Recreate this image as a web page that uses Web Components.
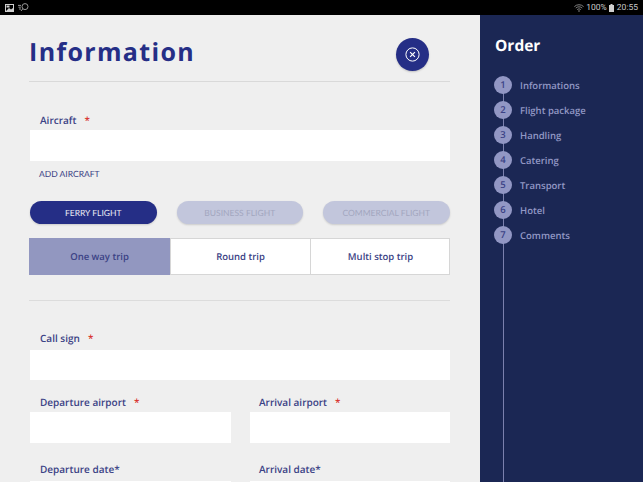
<!DOCTYPE html>
<html>
<head>
<meta charset="utf-8">
<title>Information</title>
<style>
  html, body { margin: 0; padding: 0; height: 482px; overflow: hidden; background: #efefef; }
  body { display: flex; flex-direction: column; font-family: "Open Sans", sans-serif; text-rendering: geometricPrecision; }
  .app { display: flex; flex: 1; min-height: 0; }
</style>
</head>
<body>
<status-bar></status-bar>
<div class="app">
  <info-panel>
    <form-field required style="margin-top:30px;--label-lh:17px">Aircraft</form-field>
    <add-link>ADD AIRCRAFT</add-link>
    <pill-group>
      <flight-pill active>FERRY FLIGHT</flight-pill>
      <flight-pill>BUSINESS FLIGHT</flight-pill>
      <flight-pill>COMMERCIAL FLIGHT</flight-pill>
    </pill-group>
    <trip-tabs></trip-tabs>
    <form-field required style="margin-top:28px;--box-gap:3px;--box-h:30px">Call sign</form-field>
    <field-row style="margin-top:13px;--box-gap:1px">
      <form-field required>Departure airport</form-field>
      <form-field required style="--label-pad:10px">Arrival airport</form-field>
    </field-row>
    <field-row style="margin-top:17px;--box-gap:3px">
      <form-field>Departure date*</form-field>
      <form-field style="--label-pad:10px">Arrival date*</form-field>
    </field-row>
  </info-panel>
  <order-nav>
    <order-step n="1">Informations</order-step>
    <order-step n="2">Flight package</order-step>
    <order-step n="3">Handling</order-step>
    <order-step n="4">Catering</order-step>
    <order-step n="5">Transport</order-step>
    <order-step n="6">Hotel</order-step>
    <order-step n="7">Comments</order-step>
  </order-nav>
</div>

<script>
class StatusBar extends HTMLElement {
  constructor() {
    super();
    this.attachShadow({ mode: 'open' }).innerHTML = `
    <style>
      :host { display: flex; align-items: center; justify-content: space-between; height: 15px; background: #000; color: #c9c9c9; font: 8.5px "Roboto", sans-serif; padding: 0 5px 0 5px; box-sizing: border-box; flex: none; }
      .left, .right { display: flex; align-items: center; }
      .left { gap: 4px; }
      .right { gap: 2px; }
      svg { display: block; }
    </style>
    <div class="left">
      <svg width="9" height="8" viewBox="0 0 9 8"><rect x=".5" y=".5" width="8" height="7" fill="none" stroke="#d0d0d0"/><rect x="1.5" y="1.5" width="3" height="2" fill="#d0d0d0"/><path d="M1 7 L4 4 L6 5.5 L8 4 V7Z" fill="#d0d0d0"/></svg>
      <svg width="11" height="9" viewBox="0 0 11 9" fill="none" stroke="#a8a8a8" stroke-width=".9"><circle cx="7" cy="3.6" r="3"/><path d="M4.8 5.8 L3 8M0 2.4h3M.5 4.2h2.4M1 6h2"/></svg>
    </div>
    <div class="right">
      <svg width="10" height="8" viewBox="0 0 10 8" fill="none" stroke="#8f8f8f" stroke-width=".9"><path d="M.4 2.6a6.6 6.6 0 0 1 9.2 0M1.8 4.1a4.6 4.6 0 0 1 6.4 0M3.2 5.6a2.6 2.6 0 0 1 3.6 0"/><circle cx="5" cy="7" r=".8" fill="#8f8f8f" stroke="none"/></svg>
      <span>100%</span>
      <svg width="5" height="8" viewBox="0 0 5 8" style="margin-right:1px"><path d="M1.5 0h2v1H5v7H0V1h1.5z" fill="#d0d0d0"/></svg>
      <span>20:55</span>
    </div>`;
  }
}

class InfoPanel extends HTMLElement {
  constructor() {
    super();
    this.attachShadow({ mode: 'open' }).innerHTML = `
    <style>
      :host { display: block; width: 480px; flex: none; box-sizing: border-box; padding: 0 30px 0 29px; background: #efefef; overflow: hidden; }
      header { display: flex; align-items: center; justify-content: space-between; height: 67px; border-bottom: 1px solid #d9d9d9; box-sizing: border-box; padding: 8px 21px 0 0; }
      h1 { margin: 0; font: 700 25px "Open Sans", sans-serif; letter-spacing: 1.35px; color: #252e86; }
      button { width: 33px; height: 33px; padding: 0; border: 0; border-radius: 50%; background: #252e86; display: flex; align-items: center; justify-content: center; box-shadow: 0 1px 2px rgba(0,0,0,.2); margin-top: 4px; }
    </style>
    <header>
      <h1>Information</h1>
      <button aria-label="Close">
        <svg width="15" height="15" viewBox="0 0 15 15" fill="none" stroke="#fff" stroke-width="1"><circle cx="7.5" cy="7.5" r="6.6"/><path d="M5.1 5.1l4.8 4.8M9.9 5.1l-4.8 4.8" stroke-width="1.2"/></svg>
      </button>
    </header>
    <slot></slot>`;
  }
}

class FormField extends HTMLElement {
  constructor() {
    super();
    this.attachShadow({ mode: 'open' }).innerHTML = `
    <style>
      :host { display: block; flex: 1; min-width: 0; }
      label { display: block; height: 18px; padding-left: var(--label-pad, 11px); font: 600 10px/var(--label-lh, 19px) "Open Sans", sans-serif; color: #3b4285; white-space: nowrap; }
      i { font-style: normal; color: #d8312c; margin-left: 8px; }
      .box { height: var(--box-h, 31px); background: #fff; margin: var(--box-gap, 0) 0 0 1px; }
    </style>
    <label><slot></slot><i></i></label>
    <div class="box"></div>`;
  }
  connectedCallback() {
    this.shadowRoot.querySelector('i').textContent = this.hasAttribute('required') ? '*' : '';
  }
}

class FieldRow extends HTMLElement {
  constructor() {
    super();
    this.attachShadow({ mode: 'open' }).innerHTML = `
    <style>:host { display: grid; grid-template-columns: 202px 201px; column-gap: 18px; }</style>
    <slot></slot>`;
  }
}

class AddLink extends HTMLElement {
  constructor() {
    super();
    this.attachShadow({ mode: 'open' }).innerHTML = `
    <style>:host { display: block; margin-top: 7px; padding-left: 10px; font: 400 8.5px/13px "Lato", sans-serif; color: #3b4285; }</style>
    <slot></slot>`;
  }
}

class PillGroup extends HTMLElement {
  constructor() {
    super();
    this.attachShadow({ mode: 'open' }).innerHTML = `
    <style>:host { display: flex; gap: 20px; margin: 20px 0 0 1px; }</style>
    <slot></slot>`;
  }
}

class FlightPill extends HTMLElement {
  constructor() {
    super();
    this.attachShadow({ mode: 'open' }).innerHTML = `
    <style>
      :host { display: flex; align-items: center; justify-content: center; width: 126.5px; height: 23px; border-radius: 12px; background: #c2c6dc; color: #a3a7bf; font: 400 8.5px "Lato", sans-serif; box-shadow: 0 1px 2px rgba(0,0,0,.15); }
      :host([active]) { background: #252e86; color: #e8e9f3; }
    </style>
    <slot></slot>`;
  }
}

class TripTabs extends HTMLElement {
  constructor() {
    super();
    this.attachShadow({ mode: 'open' }).innerHTML = `
    <style>
      :host { display: block; margin-top: 14px; }
      .tabs { display: grid; grid-template-columns: 140px 140px 140px; height: 37px; box-sizing: border-box; border: 1px solid #d6d6d6; background: #fff; }
      .tabs div { display: flex; align-items: center; justify-content: center; font: 600 9.5px "Open Sans", sans-serif; color: #3b4285; border-left: 1px solid #d6d6d6; }
      .tabs div:first-child { background: #9297c0; border-left: 0; margin: -1px 0 -1px -1px; }
      hr { border: 0; border-top: 1px solid #dcdcdc; margin: 25px 0 0; }
    </style>
    <div class="tabs"><div>One way trip</div><div>Round trip</div><div>Multi stop trip</div></div>
    <hr>`;
  }
}

class OrderNav extends HTMLElement {
  constructor() {
    super();
    this.attachShadow({ mode: 'open' }).innerHTML = `
    <style>
      :host { display: block; flex: 1; position: relative; background: #1b2754; padding: 0 0 0 14px; overflow: hidden; }
      h2 { margin: 0; padding: 19px 0 0 1px; font: 700 15.5px/22px "Open Sans", sans-serif; color: #fff; }
      .steps { margin-top: 20px; display: flex; flex-direction: column; gap: 7px; position: relative; }
      .line { position: absolute; left: 23px; top: 70px; bottom: 0; width: 1px; background: #7b80ad; }
    </style>
    <div class="line"></div>
    <h2>Order</h2>
    <div class="steps"><slot></slot></div>`;
  }
}

class OrderStep extends HTMLElement {
  constructor() {
    super();
    this.attachShadow({ mode: 'open' }).innerHTML = `
    <style>
      :host { display: flex; align-items: center; gap: 8px; height: 18px; position: relative; }
      b { width: 18px; height: 18px; border-radius: 50%; background: #9297c4; color: #3b4285; font: 600 9.5px/18px "Open Sans", sans-serif; text-align: center; flex: none; }
      span { font: 600 9.5px/17px "Open Sans", sans-serif; color: #9297c4; }
    </style>
    <b></b><span><slot></slot></span>`;
  }
  connectedCallback() {
    this.shadowRoot.querySelector('b').textContent = this.getAttribute('n');
  }
}

customElements.define('status-bar', StatusBar);
customElements.define('info-panel', InfoPanel);
customElements.define('form-field', FormField);
customElements.define('field-row', FieldRow);
customElements.define('add-link', AddLink);
customElements.define('pill-group', PillGroup);
customElements.define('flight-pill', FlightPill);
customElements.define('trip-tabs', TripTabs);
customElements.define('order-nav', OrderNav);
customElements.define('order-step', OrderStep);
</script>
</body>
</html>
